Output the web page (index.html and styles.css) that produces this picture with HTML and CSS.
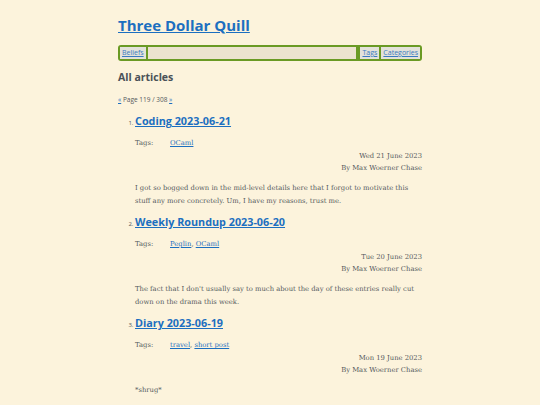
FILE: index.html
```html
<!DOCTYPE html>
<html>
<head>
<meta charset="utf-8">
<link rel="stylesheet" href="styles.css">
</head>
<body>
<div class="page">
  <h1 class="site-title"><a href="#">Three Dollar Quill</a></h1>
  <nav class="nav">
    <a href="#" class="nav-link">Beliefs</a>
    <span class="nav-fill"></span>
    <a href="#" class="nav-link">Tags</a>
    <a href="#" class="nav-link">Categories</a>
  </nav>
  <h2 class="section-title">All articles</h2>
  <p class="pager"><a href="#">«</a> Page 119 / 308 <a href="#">»</a></p>
  <ol class="articles">
    <li class="article">
      <h3 class="article-title"><a href="#">Coding 2023-06-21</a></h3>
      <div class="tags"><span class="tags-label">Tags:</span><span><a href="#">OCaml</a></span></div>
      <div class="meta"><div>Wed 21 June 2023</div><div>By Max Woerner Chase</div></div>
      <p class="summary">I got so bogged down in the mid-level details here that I forgot to motivate this stuff any more concretely. Um, I have my reasons, trust me.</p>
    </li>
    <li class="article">
      <h3 class="article-title"><a href="#">Weekly Roundup 2023-06-20</a></h3>
      <div class="tags"><span class="tags-label">Tags:</span><span><a href="#">Peglin</a>, <a href="#">OCaml</a></span></div>
      <div class="meta"><div>Tue 20 June 2023</div><div>By Max Woerner Chase</div></div>
      <p class="summary">The fact that I don't usually say to much about the day of these entries really cut down on the drama this week.</p>
    </li>
    <li class="article">
      <h3 class="article-title"><a href="#">Diary 2023-06-19</a></h3>
      <div class="tags"><span class="tags-label">Tags:</span><span><a href="#">travel</a>, <a href="#">short post</a></span></div>
      <div class="meta"><div>Mon 19 June 2023</div><div>By Max Woerner Chase</div></div>
      <p class="summary">*shrug*</p>
    </li>
  </ol>
</div>
</body>
</html>
```
FILE: styles.css
```css
html, body {
  margin: 0;
  padding: 0;
  background: #fcf3dc;
}
body {
  font-family: "DejaVu Serif", serif;
  color: #555a5c;
}
.page {
  width: 304px;
  margin: 0 auto;
  padding-top: 14px;
}
a {
  color: #1c6fc0;
}
.site-title {
  margin: 0;
  font-family: "Open Sans", sans-serif;
  font-size: 15px;
  font-weight: 700;
  line-height: 22px;
}
.nav {
  margin-top: 9px;
  display: flex;
  align-items: stretch;
  border: 2px solid #6a9a24;
  border-radius: 3px;
  background: #ece3cf;
  height: 12px;
  font-family: "Open Sans", sans-serif;
  font-size: 7px;
  line-height: 12px;
}
.nav-link {
  padding: 0 2px;
  background: #e3e2da;
  color: #3a7ac0;
}
.nav-link + .nav-fill, .nav-fill + .nav-link, .nav-link + .nav-link {
  border-left: 2px solid #6a9a24;
}
.nav-fill {
  flex: 1;
  border-right: 2px solid #6a9a24;
}
.section-title {
  margin: 8px 0 0;
  font-family: "Open Sans", sans-serif;
  font-size: 10.5px;
  font-weight: 700;
  line-height: 16px;
  color: #4a5157;
}
.pager {
  margin: 10px 0 0;
  font-family: "Open Sans", sans-serif;
  font-size: 6.5px;
  line-height: 10px;
}
.articles {
  margin: 7px 0 0;
  padding-left: 17px;
  font-family: "Open Sans", sans-serif;
  font-size: 6px;
}
.article-title {
  margin: 0;
  font-family: "Open Sans", sans-serif;
  font-size: 10.8px;
  font-weight: 700;
  line-height: 18px;
}
.tags {
  margin-top: 8px;
  display: flex;
  font-family: "DejaVu Serif", serif;
  font-size: 6.8px;
  line-height: 10px;
}
.tags-label {
  width: 35px;
}
.meta {
  margin-top: 2px;
  text-align: right;
  font-family: "DejaVu Serif", serif;
  font-size: 6.8px;
  line-height: 12px;
}
.summary {
  margin: 8px 0 6px;
  font-family: "DejaVu Serif", serif;
  font-size: 6.8px;
  line-height: 12.5px;
}
```
